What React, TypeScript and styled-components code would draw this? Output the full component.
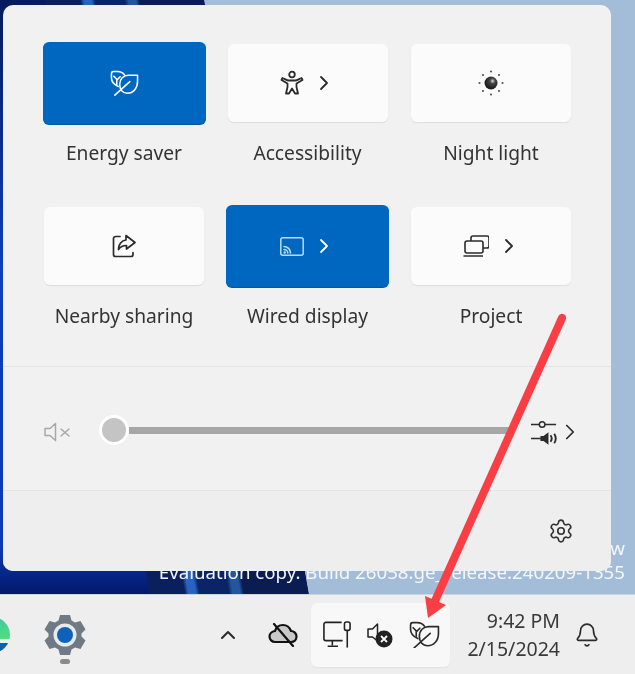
import React from 'react';
import styled, { createGlobalStyle } from 'styled-components';
import { Bell, ChevronRight, ChevronUp, Settings } from 'lucide-react';

const GlobalStyle = createGlobalStyle`
  html, body {
    margin: 0;
    padding: 0;
    background: #eeeeee;
  }
  * {
    box-sizing: border-box;
  }
`;

const Page = styled.div`
  position: relative;
  width: 635px;
  height: 674px;
  overflow: hidden;
  font-family: "Noto Sans", "Open Sans", sans-serif;
  color: #2b2b2b;
  filter: blur(0.35px);
`;

const Desktop = styled.div`
  position: relative;
  height: 594px;
  padding: 5px 24px 23px 3px;
  background:
    linear-gradient(80deg, transparent 0 41.7%, #a3bdd8 41.8% 100%),
    linear-gradient(80deg, transparent 0 20%, #0a1f5e 20.5% 25%, #2a62c0 25.5% 26.5%, #0b2468 27% 31%, #24559f 31.5% 32.5%, #0a1c52 33%),
    linear-gradient(180deg, #061a5e, #0d3fb8 45%, #0b39b4 92%, #03186a);
`;

const Watermark = styled.div`
  position: absolute;
  right: 10px;
  bottom: 10px;
  text-align: right;
  font-size: 18.7px;
  line-height: 24px;
  color: #f4f7fb;
  white-space: nowrap;
`;

const Panel = styled.section`
  position: relative;
  z-index: 1;
  width: 608px;
  height: 566px;
  display: flex;
  flex-direction: column;
  border-radius: 10px;
  background: #f1f1f1;
  overflow: hidden;
`;

const TileGrid = styled.div`
  height: 362px;
  padding: 39px 0 0 41px;
  border-bottom: 1px solid #e4e4e4;
  display: grid;
  grid-template-columns: repeat(3, 160px);
  grid-auto-rows: 120px;
  column-gap: 23.5px;
  row-gap: 43px;
`;

const TileCell = styled.div`
  display: flex;
  flex-direction: column;
  align-items: center;
`;

const Tile = styled.div<{ $on?: boolean }>`
  flex: none;
  align-self: stretch;
  height: ${(p) => (p.$on ? '82px' : '78px')};
  margin: ${(p) => (p.$on ? '-2px -1.5px' : '0')};
  display: flex;
  align-items: center;
  justify-content: center;
  gap: 8px;
  border-radius: 6px;
  background: ${(p) => (p.$on ? '#0067c0' : '#fbfbfb')};
  color: ${(p) => (p.$on ? '#ffffff' : '#2b2b2b')};
  box-shadow: ${(p) => (p.$on ? '0 1px 0 #00589f' : '0 1px 1px #dcdcdc')};
`;

const TileLabel = styled.div`
  margin-top: 19px;
  font-size: 19.2px;
  line-height: 24px;
  color: #333333;
  white-space: nowrap;
`;

const VolumeRow = styled.div`
  height: 124px;
  padding: 3px 28px 0 41px;
  border-bottom: 1px solid #e4e4e4;
  display: flex;
  align-items: center;
  color: #a8a8a8;
`;

const MuteSlot = styled.div`
  display: flex;
  padding-top: 3px;
`;

const SliderThumb = styled.div`
  flex: none;
  width: 30px;
  height: 30px;
  margin-left: 28px;
  border-radius: 50%;
  background: #c4c4c4;
  border: 3px solid #ffffff;
`;

const SliderTrack = styled.div`
  flex: none;
  width: 382px;
  height: 7px;
  background: #a6a6a6;
`;

const MixerGroup = styled.div`
  margin-left: auto;
  display: flex;
  align-items: center;
  gap: 0;
  color: #2b2b2b;
  padding-top: 3px;
`;

const Footer = styled.div`
  flex: 1;
  padding-right: 37px;
  display: flex;
  align-items: center;
  justify-content: flex-end;
  background: #eeeeee;
  color: #333333;
`;

const Taskbar = styled.footer`
  height: 80px;
  display: flex;
  align-items: center;
  background: #eeeeee;
  border-top: 1px solid #cfd4da;
  color: #2b2b2b;
`;

const EdgeApp = styled.div`
  width: 36px;
  height: 36px;
  margin-left: -26px;
  border-radius: 50%;
  background: linear-gradient(180deg, #3fc8a0, #4fe07c 62%, #f0f0f0 62% 72%, #0f5fb0 72%);
`;

const AppSlot = styled.div`
  position: relative;
  margin-left: 34px;
  width: 42px;
  height: 42px;
`;

const RunningDot = styled.div`
  position: absolute;
  left: 16px;
  top: 45px;
  width: 10px;
  height: 5px;
  border-radius: 3px;
  background: #8a8a8a;
`;

const TrayChevron = styled.div`
  margin-left: 130px;
  display: flex;
`;

const CloudSlot = styled.div`
  margin-left: 28px;
  display: flex;
`;

const QuickTray = styled.div`
  width: 139px;
  height: 64px;
  margin-left: 13px;
  padding-left: 12px;
  display: flex;
  align-items: center;
  gap: 16px;
  border-radius: 6px;
  background: #f8f8f8;
  box-shadow: 0 1px 1px #e2e2e2;
`;

const Clock = styled.div`
  width: 110px;
  text-align: right;
  font-size: 19.5px;
  line-height: 28px;
  color: #3a3a3a;
  white-space: nowrap;
`;

const BellSlot = styled.div`
  margin-left: 14px;
  display: flex;
`;

const ArrowOverlay = styled.svg`
  position: absolute;
  left: 0;
  top: 0;
  z-index: 2;
  pointer-events: none;
`;

const LeafIcon = ({ size = 30 }: { size?: number }) => (
  <svg width={size} height={size * 0.9} viewBox="0 0 30 27" fill="none" stroke="currentColor" strokeWidth="1.6" strokeLinejoin="round" strokeLinecap="round">
    <path d="M15 5C13.5 3 11 1.5 8 1.5H3.5C2 1.5 1.5 2.5 1.5 4V8C1.5 12 4 15 8.5 17" />
    <path d="M7 15V9.5M7 9.5L4 6.5M7 10.5L10.5 7" />
    <path d="M28.5 5.5H19C14 5.5 10 9 10 15C10 20 13 24 18 24C24 24 28.5 19 28.5 12Z" />
    <path d="M5 26L20.5 12" />
  </svg>
);

const PersonIcon = () => (
  <svg width="24" height="26" viewBox="0 0 24 26" fill="none" stroke="currentColor" strokeWidth="1.8" strokeLinejoin="round">
    <circle cx="12" cy="4.5" r="2.8" />
    <path d="M2.5 8C5 9 7 10.5 9 10.5H15C17 10.5 19 9 21.5 8L22.5 10L16.5 13.5V17L18 23.5H15L12 18.5L9 23.5H6L7.5 17V13.5L1.5 10Z" />
  </svg>
);

const SunIcon = () => (
  <svg width="26" height="26" viewBox="0 0 26 26">
    <defs>
      <radialGradient id="ball" cx="0.62" cy="0.35" r="0.7">
        <stop offset="0" stopColor="#d8d8d8" />
        <stop offset="0.3" stopColor="#444" />
        <stop offset="1" stopColor="#111" />
      </radialGradient>
    </defs>
    <circle cx="13" cy="13" r="6.5" fill="url(#ball)" />
    {[[13, 1.5], [21, 5], [24.5, 13], [21, 21], [13, 24.5], [5, 21], [1.5, 13], [5, 5]].map(([x, y]) => (
      <circle key={`${x}-${y}`} cx={x} cy={y} r="1.1" fill="#555" />
    ))}
  </svg>
);

const ShareIcon = () => (
  <svg width="24" height="24" viewBox="0 0 24 24" fill="none" stroke="currentColor" strokeWidth="1.7" strokeLinejoin="round" strokeLinecap="round">
    <path d="M8 2.5H3.5A2 2 0 0 0 1.5 4.5V20.5A2 2 0 0 0 3.5 22.5H19A2 2 0 0 0 21 20.5V18.5" />
    <path d="M14 1.5L23 8.5L14.5 15V11.5C11 11.5 8.5 12.5 6.5 15.5C6.5 10.5 9.5 6.5 14 6Z" />
  </svg>
);

const CastIcon = () => (
  <svg width="24" height="19" viewBox="0 0 24 19" fill="none" stroke="#bcdaf7" strokeWidth="1.5" strokeLinecap="round">
    <rect x="0.8" y="0.8" width="22.4" height="17.4" rx="2" />
    <path d="M4 9.5C7.5 9.5 10.5 12.5 10.5 16M4 12.5C6 12.5 7.8 14 7.8 16" strokeWidth="1.6" />
    <circle cx="4.7" cy="15.5" r="1.2" fill="#bcdaf7" stroke="none" />
  </svg>
);

const ProjectIcon = () => (
  <svg width="28" height="22" viewBox="-2 0 28 22" fill="none" stroke="currentColor" strokeWidth="1.6" strokeLinejoin="round">
    <path d="M8 6V3A2 2 0 0 1 10 1H24A2 2 0 0 1 26 3V11A2 2 0 0 1 24 13H20" />
    <rect x="2" y="6" width="18" height="12" rx="2" fill="#fbfbfb" />
    <path d="M0.5 21H20" />
  </svg>
);

const MuteIcon = () => (
  <svg width="27" height="20" viewBox="0 0 27 20" fill="none" stroke="currentColor" strokeWidth="1.5" strokeLinejoin="round" strokeLinecap="round">
    <path d="M1 6.5H6L11.5 1.5V18.5L6 13.5H1Z" />
    <path d="M17 7L25 14M25 7L17 14" />
  </svg>
);

const MixerIcon = () => (
  <svg width="26" height="28" viewBox="0 0 28 28" fill="none" stroke="currentColor" strokeWidth="1.6">
    <path d="M0 6H9M15 6H27" />
    <circle cx="12" cy="6" r="3" />
    <path d="M0 21H11" />
    <path d="M11 19H14L18 16V26L14 23H11Z" fill="currentColor" />
    <path d="M21 17.5C22.5 19.5 22.5 22.5 21 24.5M25 16C27 19 27 23 25 26" strokeWidth="2" />
  </svg>
);

const GearApp = () => (
  <svg width="42" height="42" viewBox="0 0 42 42">
    <path
      d="M16 1H26L27.5 6.5L31 8.5L36.5 7L41.5 15.5L37.5 19.5V22.5L41.5 26.5L36.5 35L31 33.5L27.5 35.5L26 41H16L14.5 35.5L11 33.5L5.5 35L0.5 26.5L4.5 22.5V19.5L0.5 15.5L5.5 7L11 8.5L14.5 6.5Z"
      fill="#6f7a85"
      strokeLinejoin="round"
    />
    <circle cx="21" cy="21" r="11.5" fill="#e8ebee" />
    <circle cx="21" cy="21" r="8" fill="#0f62b8" />
  </svg>
);

const CloudOffIcon = () => (
  <svg width="30" height="24" viewBox="0 0 30 24" fill="none" stroke="#111" strokeWidth="2.2" strokeLinecap="round">
    <path d="M7 19H23C26.5 19 28.5 16.5 28.5 13.5C28.5 10.5 26 8 23 8C21.5 4 18.5 2 15 2C11 2 8 4.5 7 8C3.5 8.5 1.5 11 1.5 13.5C1.5 16.5 4 19 7 19Z" fill="#c8c8c8" />
    <path d="M6 1L25 23" />
  </svg>
);

const MonitorPlugIcon = () => (
  <svg width="28" height="30" viewBox="0 0 30 30" fill="none" stroke="#222" strokeWidth="1.7" strokeLinejoin="round">
    <path d="M20 1.5H3A2 2 0 0 0 1 3.5V19A2 2 0 0 0 3 21H21" />
    <path d="M10 21V26M5 27H16" />
    <rect x="23" y="1" width="6" height="9" rx="2" />
    <path d="M26 10V28.5" />
  </svg>
);

const SpeakerOffIcon = () => (
  <svg width="26" height="26" viewBox="0 0 26 26" fill="none" stroke="#222" strokeWidth="1.5" strokeLinejoin="round">
    <path d="M1 7H5.5L10.5 2V19L5.5 15H1Z" />
    <circle cx="17" cy="17" r="8.5" fill="#222" stroke="none" />
    <path d="M14 14L20 20M20 14L14 20" stroke="#f8f8f8" strokeWidth="1.8" />
  </svg>
);

const tiles = [
  { label: 'Energy saver', on: true, icon: <LeafIcon size={29} /> },
  { label: 'Accessibility', more: true, icon: <PersonIcon /> },
  { label: 'Night light', icon: <SunIcon /> },
  { label: 'Nearby sharing', icon: <ShareIcon /> },
  { label: 'Wired display', on: true, more: true, icon: <CastIcon /> },
  { label: 'Project', more: true, icon: <ProjectIcon /> },
];

export default function App() {
  return (
    <Page>
      <GlobalStyle />
      <Desktop>
        <Watermark>
          Windows 11 Enterprise Insider Preview
          <br />
          Evaluation copy. Build 26058.ge_release.240209-1355
        </Watermark>
        <Panel>
          <TileGrid>
            {tiles.map((t) => (
              <TileCell key={t.label}>
                <Tile $on={t.on}>
                  {t.icon}
                  {t.more && <ChevronRight size={24} strokeWidth={1.8} />}
                </Tile>
                <TileLabel>{t.label}</TileLabel>
              </TileCell>
            ))}
          </TileGrid>
          <VolumeRow>
            <MuteSlot>
              <MuteIcon />
            </MuteSlot>
            <SliderThumb />
            <SliderTrack />
            <MixerGroup>
              <MixerIcon />
              <ChevronRight size={26} strokeWidth={1.6} />
            </MixerGroup>
          </VolumeRow>
          <Footer>
            <Settings size={26} strokeWidth={1.5} />
          </Footer>
        </Panel>
      </Desktop>
      <Taskbar>
        <EdgeApp />
        <AppSlot>
          <GearApp />
          <RunningDot />
        </AppSlot>
        <TrayChevron>
          <ChevronUp size={24} strokeWidth={2} />
        </TrayChevron>
        <CloudSlot>
          <CloudOffIcon />
        </CloudSlot>
        <QuickTray>
          <MonitorPlugIcon />
          <SpeakerOffIcon />
          <LeafIcon size={31} />
        </QuickTray>
        <Clock>
          9:42 PM
          <br />
          2/15/2024
        </Clock>
        <BellSlot>
          <Bell size={26} strokeWidth={1.5} />
        </BellSlot>
      </Taskbar>
      <ArrowOverlay width="635" height="674" viewBox="0 0 635 674">
        <path d="M562 318L435 601" stroke="#fa3e44" strokeWidth="8" strokeLinecap="round" fill="none" />
        <path d="M428 618L425 596L446 605Z" fill="#fa3e44" />
      </ArrowOverlay>
    </Page>
  );
}
